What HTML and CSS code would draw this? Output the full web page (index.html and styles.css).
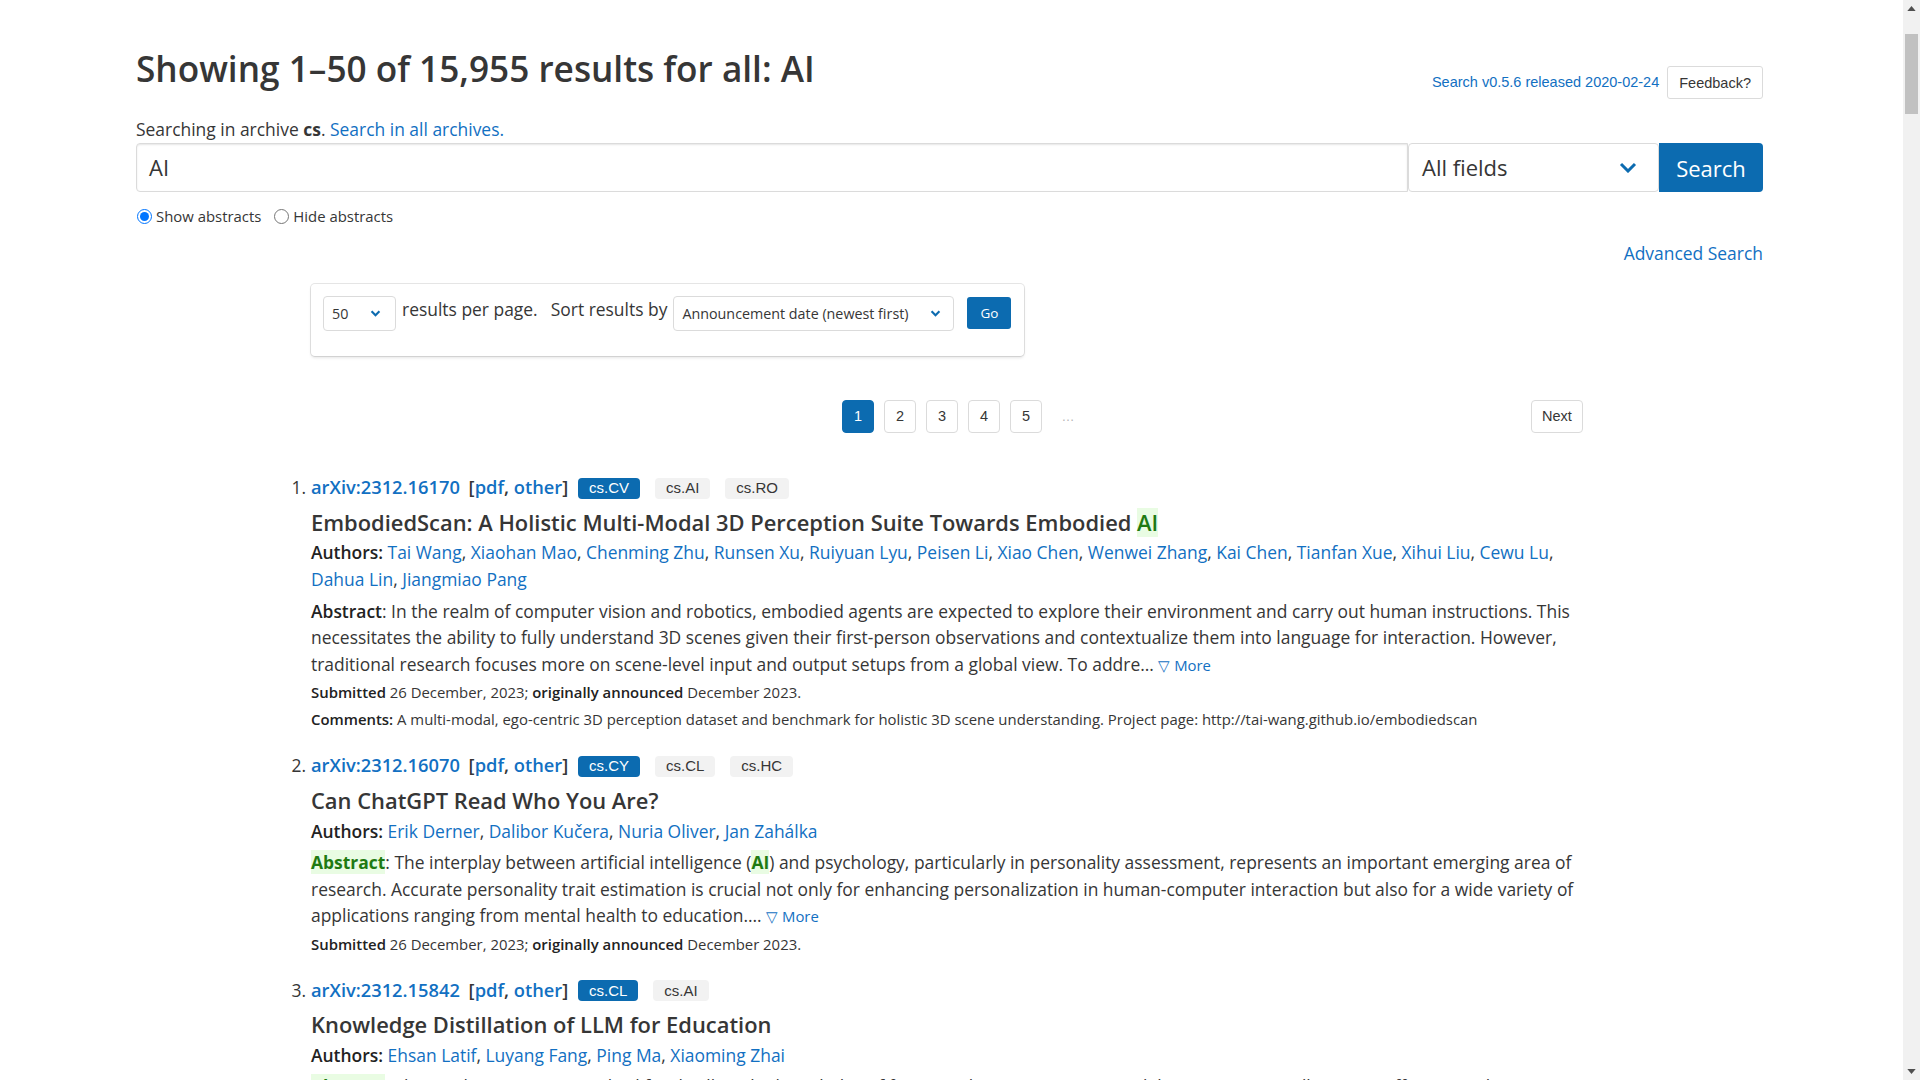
FILE: index.html
```html
<!DOCTYPE html>
<html lang="en">
<head>
<meta charset="utf-8">
<title>Search | arXiv e-print repository</title>
<link rel="stylesheet" href="styles.css">
</head>
<body>
<main class="page">
  <div class="head-row">
    <h1 class="title">Showing 1–50 of 15,955 results for all: AI</h1>
    <div class="release">
      <a href="#">Search v0.5.6 released 2020-02-24</a>
      <button class="feedback" type="button">Feedback?</button>
    </div>
  </div>

  <p class="archive">Searching in archive <b>cs</b>. <a href="#">Search in all archives.</a></p>

  <form class="search-bar">
    <div class="query">AI</div>
    <div class="field-select">
      <span>All fields</span>
      <svg class="chev-lg" viewBox="0 0 18 11" width="18" height="11"><polyline points="2,2 9,9 16,2" fill="none" stroke="#0c6bb0" stroke-width="3"/></svg>
    </div>
    <button class="search-btn" type="button">Search</button>
  </form>

  <div class="abs-toggle">
    <label><input type="radio" name="abs" checked> Show abstracts</label>
    <label><input type="radio" name="abs"> Hide abstracts</label>
  </div>

  <div class="adv-row"><a href="#">Advanced Search</a></div>

  <section class="results-col">
    <div class="options-box">
      <div class="mini-select size-sel">
        <span>50</span>
        <svg viewBox="0 0 12 8" width="11" height="7"><polyline points="1.5,1.5 6,6 10.5,1.5" fill="none" stroke="#0c6bb0" stroke-width="2.4"/></svg>
      </div>
      <span class="opt-text per-page">results per page.</span>
      <span class="opt-text sort-label">Sort results by</span>
      <div class="mini-select sort-sel">
        <span>Announcement date (newest first)</span>
        <svg viewBox="0 0 12 8" width="11" height="7"><polyline points="1.5,1.5 6,6 10.5,1.5" fill="none" stroke="#0c6bb0" stroke-width="2.4"/></svg>
      </div>
      <button class="go-btn" type="button">Go</button>
    </div>

    <nav class="pagination">
      <ul class="pg-list">
        <li><a class="pg-link is-current" href="#">1</a></li>
        <li><a class="pg-link" href="#">2</a></li>
        <li><a class="pg-link" href="#">3</a></li>
        <li><a class="pg-link" href="#">4</a></li>
        <li><a class="pg-link" href="#">5</a></li>
        <li><span class="pg-ellipsis">…</span></li>
      </ul>
      <a class="pg-next" href="#">Next</a>
    </nav>

    <ol class="results">
      <li class="result">
        <p class="list-title"><a href="#">arXiv:2312.16170</a> <span class="links">[<a href="#">pdf</a>, <a href="#">other</a>]</span>
          <span class="tags"><span class="tag primary">cs.CV</span><span class="tag">cs.AI</span><span class="tag">cs.RO</span></span></p>
        <p class="paper-title">EmbodiedScan: A Holistic Multi-Modal 3D Perception Suite Towards Embodied <span class="hit">AI</span></p>
        <p class="authors"><b>Authors:</b> <a href="#">Tai Wang</a>, <a href="#">Xiaohan Mao</a>, <a href="#">Chenming Zhu</a>, <a href="#">Runsen Xu</a>, <a href="#">Ruiyuan Lyu</a>, <a href="#">Peisen Li</a>, <a href="#">Xiao Chen</a>, <a href="#">Wenwei Zhang</a>, <a href="#">Kai Chen</a>, <a href="#">Tianfan Xue</a>, <a href="#">Xihui Liu</a>, <a href="#">Cewu Lu</a>, <a href="#">Dahua Lin</a>, <a href="#">Jiangmiao Pang</a></p>
        <p class="abstract"><b>Abstract</b>: In the realm of computer vision and robotics, embodied agents are expected to explore their environment and carry out human instructions. This necessitates the ability to fully understand 3D scenes given their first-person observations and contextualize them into language for interaction. However, traditional research focuses more on scene-level input and output setups from a global view. To addre… <a class="more" href="#">▽ More</a></p>
        <p class="meta"><b>Submitted</b> 26 December, 2023; <b>originally announced</b> December 2023.</p>
        <p class="meta"><b>Comments:</b> A multi-modal, ego-centric 3D perception dataset and benchmark for holistic 3D scene understanding. Project page: http://tai-wang.github.io/embodiedscan</p>
      </li>
      <li class="result">
        <p class="list-title"><a href="#">arXiv:2312.16070</a> <span class="links">[<a href="#">pdf</a>, <a href="#">other</a>]</span>
          <span class="tags"><span class="tag primary">cs.CY</span><span class="tag">cs.CL</span><span class="tag">cs.HC</span></span></p>
        <p class="paper-title">Can ChatGPT Read Who You Are?</p>
        <p class="authors"><b>Authors:</b> <a href="#">Erik Derner</a>, <a href="#">Dalibor Kučera</a>, <a href="#">Nuria Oliver</a>, <a href="#">Jan Zahálka</a></p>
        <p class="abstract"><span class="hit"><b>Abstract</b></span>: The interplay between artificial intelligence (<span class="hit"><b>AI</b></span>) and psychology, particularly in personality assessment, represents an important emerging area of research. Accurate personality trait estimation is crucial not only for enhancing personalization in human-computer interaction but also for a wide variety of applications ranging from mental health to education.… <a class="more" href="#">▽ More</a></p>
        <p class="meta"><b>Submitted</b> 26 December, 2023; <b>originally announced</b> December 2023.</p>
      </li>
      <li class="result">
        <p class="list-title"><a href="#">arXiv:2312.15842</a> <span class="links">[<a href="#">pdf</a>, <a href="#">other</a>]</span>
          <span class="tags"><span class="tag primary">cs.CL</span><span class="tag">cs.AI</span></span></p>
        <p class="paper-title">Knowledge Distillation of LLM for Education</p>
        <p class="authors"><b>Authors:</b> <a href="#">Ehsan Latif</a>, <a href="#">Luyang Fang</a>, <a href="#">Ping Ma</a>, <a href="#">Xiaoming Zhai</a></p>
        <p class="abstract"><span class="hit"><b>Abstract</b></span>: This study proposes a method for distilling the knowledge of fine-tuned Large Language Models (LLMs) into smaller, more efficient, and accurate neural networks, specifically targeting the challenge of deploying these models on resource-constrained devices.… <a class="more" href="#">▽ More</a></p>
        <p class="meta"><b>Submitted</b> 26 December, 2023; <b>originally announced</b> December 2023.</p>
      </li>
    </ol>
  </section>
</main>

<div class="scrollbar" aria-hidden="true">
  <div class="sb-arrow up"><svg viewBox="0 0 10 6" width="9" height="5"><polygon points="0,6 5,0 10,6" fill="#505050"/></svg></div>
  <div class="sb-track"><div class="sb-thumb"></div></div>
  <div class="sb-arrow down"><svg viewBox="0 0 10 6" width="9" height="5"><polygon points="0,0 10,0 5,6" fill="#505050"/></svg></div>
</div>
</body>
</html>
```
FILE: styles.css
```css
* { box-sizing: border-box; }
html, body { margin: 0; padding: 0; }
body {
  font-family: "Open Sans", "Noto Sans", sans-serif;
  font-size: 17.45px;
  line-height: 1.5;
  color: #363636;
  background: #fff;
}
a { color: #1270c2; text-decoration: none; }
p { margin: 0; }

.page { width: 1627px; margin-left: 136px; padding-top: 49px; padding-bottom: 60px; }

.head-row { display: flex; justify-content: space-between; align-items: flex-start; }
.title { margin: 0; font-size: 35.2px; font-weight: 600; line-height: 1.125; color: #363636; }
.release {
  display: flex; align-items: center; gap: 8px; margin-top: 17px;
  font-family: "Liberation Sans", Arial, sans-serif; font-size: 14.5px;
}
.feedback {
  height: 33px; padding: 0 11px; border: 1px solid #dbdbdb; border-radius: 3px;
  background: #fff; color: #363636; font-family: "Liberation Sans", Arial, sans-serif; font-size: 14.5px;
}

.archive { margin: 17px 0 1px; }

.search-bar { display: flex; height: 49px; }
.query {
  flex: 0 0 1272px; display: flex; align-items: center; padding: 0 12px;
  border: 1px solid #dbdbdb; border-radius: 4px 0 0 4px;
  box-shadow: inset 0 1px 2px rgba(10,10,10,.1);
  font-size: 22px; color: #363636;
}
.field-select {
  flex: 0 0 251px; display: flex; align-items: center; justify-content: space-between;
  padding: 0 21px 0 13px; border: 1px solid #dbdbdb; border-radius: 4px;
  font-size: 22px; color: #363636;
}
.search-btn {
  flex: 0 0 104px; border: none; border-radius: 0 4px 4px 0; background: #0c6bb0; color: #fff;
  font-family: "Open Sans", sans-serif; font-size: 22px;
}

.abs-toggle { display: flex; align-items: center; margin-top: 14px; font-size: 14.9px; line-height: 21px; }
.abs-toggle label { display: flex; align-items: center; margin-right: 12px; }
.abs-toggle input { width: 15px; height: 15px; margin: 0 4px 0 1px; }

.adv-row { display: flex; justify-content: flex-end; margin-top: 13px; }

.results-col { margin-left: 175px; width: 1272px; }

.options-box {
  width: 713px; margin-top: 18px; padding: 12px 13px 25px 12px;
  display: flex; align-items: flex-start; white-space: nowrap;
  border-radius: 4px;
  box-shadow: 0 2px 3px rgba(10,10,10,.1), 0 0 0 1px rgba(10,10,10,.1);
}
.options-box > * { flex-shrink: 0; }
.mini-select {
  display: flex; align-items: center; justify-content: space-between; height: 35px;
  border: 1px solid #dbdbdb; border-radius: 4px; font-size: 14.3px; color: #363636;
}
.size-sel { width: 73px; padding: 0 14px 0 8px; }
.sort-sel { width: 281px; padding: 0 12px 0 8px; margin-left: 6px; }
.opt-text { font-size: 17.45px; line-height: 26px; }
.per-page { margin-left: 6px; }
.sort-label { margin-left: 13px; }
.go-btn {
  width: 44px; height: 32px; margin-left: 13px; margin-top: 1px; border: none; border-radius: 3px;
  background: #0c6bb0; color: #fff; font-family: "Open Sans", sans-serif; font-size: 13.5px;
}

.pagination { display: flex; align-items: center; margin-top: 44px; height: 33px; }
.pg-list { display: flex; align-items: center; gap: 10px; list-style: none; margin: 0 0 0 531px; padding: 0; }
.pg-link, .pg-next {
  display: flex; align-items: center; justify-content: center; height: 33px; min-width: 32px;
  border: 1px solid #dbdbdb; border-radius: 4px; color: #363636;
  font-family: "Liberation Sans", Arial, sans-serif; font-size: 14.5px;
}
.pg-link.is-current { background: #0c6bb0; border-color: #0c6bb0; color: #fff; }
.pg-ellipsis { display: block; width: 32px; text-align: center; color: #b5b5b5; font-size: 13px; font-family: "Liberation Sans", Arial, sans-serif; }
.pg-next { margin-left: auto; width: 52px; }

.results { margin: 41px 0 0 -20px; padding: 0; list-style: none; counter-reset: res; }
.result {
  display: grid; grid-template-columns: 20px 1fr; margin-bottom: 17px;
  counter-increment: res;
}
.result::before {
  content: counter(res) ".";
  grid-column: 1; grid-row: 1; padding-right: 5px; text-align: right;
  font-size: 17.45px; line-height: 26px; white-space: nowrap;
}
.result > * { grid-column: 2; }
.list-title { grid-row: 1; line-height: 26px; margin-bottom: 10.5px; font-weight: 600; font-size: 18.3px; }
.list-title .links { margin-left: 4px; color: #363636; }
.tags { display: inline-flex; gap: 15px; margin-left: 5px; vertical-align: 1px; font-weight: 400; }
.tag {
  display: inline-flex; align-items: center; height: 21px; padding: 0 11px; border-radius: 4px;
  background: #f2f2f2; color: #363636; font-family: "Liberation Sans", Arial, sans-serif; font-size: 15px;
}
.tag.primary { background: #0c6bb0; color: #fff; }
.paper-title { font-size: 21.9px; font-weight: 600; line-height: 1.125; margin-bottom: 4px; }
.authors { line-height: 27px; margin-bottom: 4.5px; }
.authors b, .abstract b, .meta b { font-weight: 600; color: #222; }
.abstract { line-height: 26.5px; margin-bottom: 3px; }
.more { font-size: 14.9px; }
.meta { font-size: 14.9px; line-height: 22px; margin-bottom: 5px; }
.hit { background: #e9fce3; color: #1f7a12; }
.abstract .hit b { color: #1f7a12; font-weight: 700; }

.scrollbar {
  position: fixed; top: 0; right: 0; width: 17px; height: 100vh;
  display: flex; flex-direction: column; background: #f1f1f1;
}
.sb-arrow { height: 17px; display: flex; align-items: center; justify-content: center; flex-shrink: 0; }
.sb-track { flex: 1; padding: 17px 2px 0; }
.sb-thumb { height: 80px; background: #c1c1c1; }
```
